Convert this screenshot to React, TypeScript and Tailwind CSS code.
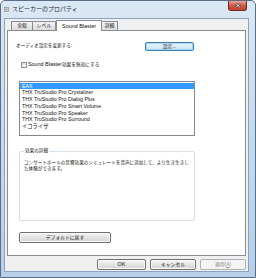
import React from "react";

const FONT = "font-['Liberation_Sans','Noto_Sans_CJK_JP',sans-serif]";

function Btn({
  children,
  className = "",
  focused = false,
  disabled = false,
}: {
  children: React.ReactNode;
  className?: string;
  focused?: boolean;
  disabled?: boolean;
}) {
  const look = disabled
    ? "border-[#adb2b5] bg-[#f4f4f4] text-[#8a8a8a]"
    : focused
      ? "border-[#3c7fb1] bg-gradient-to-b from-[#eaf6fd] to-[#c9e2f3] text-[#111] shadow-[inset_0_0_0_1px_#a7d7f4]"
      : "border-[#707070] bg-gradient-to-b from-[#f3f3f3] to-[#d4d4d4] text-[#111] shadow-[inset_0_0_0_1px_#fbfbfb]";
  return (
    <div
      className={`flex items-center justify-center rounded-[2px] border text-[4.8px] ${look} ${className}`}
    >
      {children}
    </div>
  );
}

const EFFECTS = [
  "EAX",
  "THX TruStudio Pro Crystalizer",
  "THX TruStudio Pro Dialog Plus",
  "THX TruStudio Pro Smart Volume",
  "THX TruStudio Pro Speaker",
  "THX TruStudio Pro Surround",
  "イコライザ",
];

export default function App() {
  return (
    <div
      className={`${FONT} flex h-[278px] w-[256px] flex-col overflow-hidden rounded-t-[5px] border border-[#5a6f86] bg-gradient-to-b from-[#dbe8f5] via-[#c5daef] to-[#b7cfe9] pb-[5px] pl-[3px] pr-[6px]`}
    >
      {/* Title bar */}
      <div className="flex h-[17px] shrink-0 items-start">
        <div className="mt-[5px] flex items-center gap-[3px]">
          <svg width="5" height="5" viewBox="0 0 5 5">
            <rect x="0.5" y="0.5" width="4" height="4" fill="#e8e8e8" stroke="#7a7a7a" strokeWidth="0.6" />
            <rect x="1.5" y="1.5" width="2" height="2" fill="#9a9a9a" />
          </svg>
          <span className="text-[6px] leading-[6px] text-[#1e1e1e]">スピーカーのプロパティ</span>
        </div>
        <div className="ml-auto mr-[2px] flex h-[10px] w-[19px] items-center justify-center rounded-b-[3px] border border-t-0 border-[#6d2b24] bg-gradient-to-b from-[#e6a699] via-[#cf5a48] to-[#c2402d]">
          <svg width="6" height="5" viewBox="0 0 6 5">
            <path d="M1 0.6 L5 4.4 M5 0.6 L1 4.4" stroke="#3b1410" strokeWidth="1.8" />
            <path d="M1 0.6 L5 4.4 M5 0.6 L1 4.4" stroke="#ffffff" strokeWidth="1" />
          </svg>
        </div>
      </div>

      {/* Client area */}
      <div className="flex flex-1 flex-col border border-[#8aa3bf] bg-[#f0f0f0] pl-[2px] pr-[2px] pt-[1px]">
        {/* Tabs */}
        <div className="ml-[4px] flex h-[10px] items-end">
          <div className="flex h-[9px] w-[22px] items-center justify-center rounded-t-[1px] border border-b-0 border-[#898c95] bg-gradient-to-b from-[#f2f2f2] to-[#dcdcdc] text-[4.8px] text-[#111]">
            全般
          </div>
          <div className="flex h-[9px] w-[23px] items-center justify-center rounded-t-[1px] border border-b-0 border-l-0 border-[#898c95] bg-gradient-to-b from-[#f2f2f2] to-[#dcdcdc] text-[4.8px] text-[#111]">
            レベル
          </div>
          <div className="relative z-10 -mb-px flex h-[11px] w-[46px] items-center justify-center rounded-t-[1px] border border-b-0 border-[#898c95] bg-white text-[5.4px] text-[#111]">
            Sound Blaster
          </div>
          <div className="flex h-[9px] w-[16px] items-center justify-center rounded-t-[1px] border border-b-0 border-l-0 border-[#898c95] bg-gradient-to-b from-[#f2f2f2] to-[#dcdcdc] text-[4.8px] text-[#111]">
            詳細
          </div>
        </div>

        {/* Tab panel */}
        <div className="flex h-[226px] flex-col border border-[#898c95] bg-white pl-[11px]">
          <div className="mt-[11px] flex h-[9px] w-[176px] items-center">
            <span className="-ml-[3px] text-[4.6px] text-[#111]">オーディオ設定を変更する:</span>
            <Btn focused className="ml-auto mr-[1px] h-[9px] w-[49px]">
              設定...
            </Btn>
          </div>

          <div className="mt-[10px] flex items-center gap-[1px] pl-[2px]">
            <div className="h-[6px] w-[6px] border border-[#8e8f8f] bg-gradient-to-br from-[#dcdcdc] to-[#fdfdfd]" />
            <span className="text-[5.4px] leading-[6px] text-[#111]">
              Sound Blaster<span className="text-[4.7px]">効果を無効にする</span>
            </span>
          </div>

          <div className="mt-[13px] flex h-[55px] w-[176px] flex-col border border-[#828790] bg-white pt-[0.5px]">
            {EFFECTS.map((e, i) => (
              <div
                key={e}
                className={`h-[6.8px] shrink-0 px-[2px] text-[5.3px] leading-[6.8px] ${
                  i === 0 ? "bg-[#3399ff] text-white" : "text-[#111]"
                } ${e === "イコライザ" ? "text-[4.6px]" : ""}`}
              >
                {e}
              </div>
            ))}
          </div>

          <fieldset className="mt-[12px] h-[73px] w-[176px] rounded-[2px] border border-[#d5dfe5] pl-[4px]">
            <legend className="px-[1px] text-[4.6px] leading-[6px] text-[#111]">効果の詳細</legend>
            <div className="mt-[6px] text-[4.6px] leading-[6.4px] text-[#111]">
              <div className="whitespace-nowrap">
                コンサートホールの音響効果のシミュレートを音声に追加して、より生き生きし
              </div>
              <div className="whitespace-nowrap">た体験ができます。</div>
            </div>
          </fieldset>

          <Btn className="mt-[11px] h-[11px] w-[92px]">デフォルトに戻す</Btn>
        </div>

        {/* Dialog buttons */}
        <div className="mt-[3px] flex justify-end gap-[4px] pr-[0px]">
          <Btn className="h-[11px] w-[49px] text-[5.4px]">OK</Btn>
          <Btn className="h-[11px] w-[46px]">キャンセル</Btn>
          <Btn disabled className="h-[11px] w-[46px]">
            適用(<span className="underline">A</span>)
          </Btn>
        </div>
      </div>
    </div>
  );
}
